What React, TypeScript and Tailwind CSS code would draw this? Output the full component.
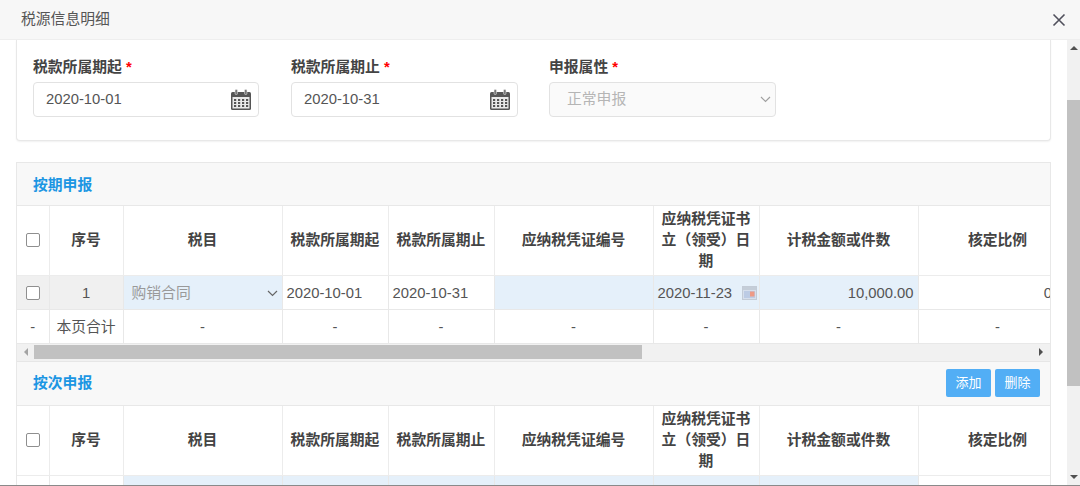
import React from 'react';

const FONT = "font-['Liberation_Sans','Noto_Sans_CJK_SC',sans-serif]";

const columns = [
  { title: '', w: 32 },
  { title: '序号', w: 74 },
  { title: '税目', w: 159 },
  { title: '税款所属期起', w: 106 },
  { title: '税款所属期止', w: 106 },
  { title: '应纳税凭证编号', w: 159 },
  { title: '应纳税凭证书立（领受）日期', w: 106 },
  { title: '计税金额或件数', w: 159 },
  { title: '核定比例', w: 159 },
];

const CalendarIcon = () => (
  <svg width="22" height="22" viewBox="0 0 22 22" className="shrink-0">
    <rect x="1" y="3" width="20" height="18" rx="1.5" fill="#555" />
    <rect x="2.5" y="8" width="17" height="11.5" fill="#e9e9e9" />
    <rect x="5" y="0.5" width="2.5" height="5" rx="1" fill="#777" stroke="#eee" strokeWidth="0.5" />
    <rect x="14.5" y="0.5" width="2.5" height="5" rx="1" fill="#777" stroke="#eee" strokeWidth="0.5" />
    {[4, 8, 12, 16].map((x) =>
      [10, 13, 16].map((y) => <rect key={`${x}-${y}`} x={x} y={y} width="2.2" height="2" fill="#555" />),
    )}
  </svg>
);

const SmallCalendar = () => (
  <svg width="15" height="14" viewBox="0 0 15 14" className="shrink-0">
    <rect x="0.5" y="0.5" width="14" height="13" fill="#d6dfec" stroke="#c3cbd6" />
    <rect x="1" y="1" width="13" height="3" fill="#c4cdd8" />
    <rect x="2" y="5" width="11" height="7" fill="#bccbe4" />
    <rect x="8" y="5.5" width="4.5" height="5" fill="#ee9a86" />
  </svg>
);

const Chevron = ({ color = '#666' }: { color?: string }) => (
  <svg width="11" height="7" viewBox="0 0 11 7" fill="none" className="shrink-0">
    <path d="M1 1l4.5 4.5L10 1" stroke={color} strokeWidth="1.2" />
  </svg>
);

const Checkbox = () => (
  <span className="block w-[14px] h-[14px] mx-auto bg-white border border-[#8f8f8f] rounded-[2px]" />
);

const Label = ({ text }: { text: string }) => (
  <div className="h-[28px] font-bold text-[14.8px] leading-[26px] text-[#444] whitespace-nowrap">
    {text} <span className="text-[#f00]">*</span>
  </div>
);

const DateField = ({ label, value, width }: { label: string; value: string; width: string }) => (
  <div className={width}>
    <Label text={label} />
    <div className="h-[35px] flex items-center justify-between pl-[12px] pr-[6px] border border-[#e2e2e2] rounded-[4px] text-[14.8px] text-[#555]">
      <span>{value}</span>
      <CalendarIcon />
    </div>
  </div>
);

const HeadRow = ({ height }: { height: string }) => (
  <tr className={height}>
    {columns.map((c, i) => (
      <th
        key={i}
        className="px-1 border-r border-b border-[#ececec] text-[14.8px] leading-[21px] font-bold text-[#444] text-center align-middle"
      >
        {i === 0 ? <Checkbox /> : c.title}
      </th>
    ))}
  </tr>
);

const ColGroup = () => (
  <colgroup>
    {columns.map((c, i) => (
      <col key={i} style={{ width: c.w }} />
    ))}
  </colgroup>
);

const cellBase = 'border-r border-b border-[#e8e8e8] text-[14.8px] text-[#555] p-0 pt-[2px] whitespace-nowrap overflow-hidden';
const blue = 'bg-[#e5f0fa]';

const PeriodTable = () => (
  <table className="table-fixed border-collapse w-[1060px]">
    <ColGroup />
    <thead>
      <HeadRow height="h-[69px]" />
    </thead>
    <tbody>
      <tr className="h-[34px]">
        <td className={`${cellBase} bg-[#f0f0f0]`}>
          <Checkbox />
        </td>
        <td className={`${cellBase} bg-[#f0f0f0] text-center`}>1</td>
        <td className={`${cellBase} ${blue}`}>
          <div className="flex items-center justify-between pl-2 pr-[4px] text-[#999]">
            购销合同
            <Chevron />
          </div>
        </td>
        <td className={`${cellBase} pl-[4px]`}>2020-10-01</td>
        <td className={`${cellBase} pl-[4px]`}>2020-10-31</td>
        <td className={`${cellBase} ${blue}`} />
        <td className={`${cellBase} ${blue}`}>
          <div className="flex items-center justify-between pl-[4px] pr-[2px]">
            2020-11-23
            <SmallCalendar />
          </div>
        </td>
        <td className={`${cellBase} ${blue} text-right pr-[4px]`}>10,000.00</td>
        <td className={`${cellBase} text-right pr-[4px]`}>0.00</td>
      </tr>
      <tr className="h-[34px]">
        <td className={`${cellBase} text-center`}>-</td>
        <td className={`${cellBase} text-center`}>本页合计</td>
        {[0, 1, 2, 3, 4, 5, 6].map((i) => (
          <td key={i} className={`${cellBase} text-center`}>
            -
          </td>
        ))}
      </tr>
    </tbody>
  </table>
);

const TimesTable = () => (
  <table className="table-fixed border-collapse w-[1060px]">
    <ColGroup />
    <thead>
      <HeadRow height="h-[70px]" />
    </thead>
    <tbody>
      <tr className="h-[34px]">
        <td className={cellBase}>
          <Checkbox />
        </td>
        <td className={cellBase} />
        {[0, 1, 2, 3, 4, 5].map((i) => (
          <td key={i} className={`${cellBase} ${blue}`} />
        ))}
        <td className={cellBase} />
      </tr>
    </tbody>
  </table>
);

const HScrollbar = () => (
  <div className="h-[18px] shrink-0 flex items-center bg-[#f1f1f1] border-b border-[#e6e6e6]">
    <div className="w-[17px] shrink-0 flex justify-center">
      <span className="w-0 h-0 border-y-[4px] border-y-transparent border-r-[4px] border-r-[#a3a3a3]" />
    </div>
    <div className="w-[608px] h-[14px] bg-[#c1c1c1]" />
    <div className="flex-1" />
    <div className="w-[18px] shrink-0 flex justify-center">
      <span className="w-0 h-0 border-y-[4px] border-y-transparent border-l-[4px] border-l-[#505050]" />
    </div>
  </div>
);

const VScrollbar = () => (
  <div className="w-[13px] shrink-0 flex flex-col bg-[#f1f1f1]">
    <div className="h-[60px] pt-[6px] flex justify-center">
      <span className="w-0 h-0 border-x-[4px] border-x-transparent border-b-[4px] border-b-[#505050]" />
    </div>
    <div className="h-[286px] bg-[#c1c1c1]" />
    <div className="flex-1 flex items-end justify-center pb-[6px]">
      <span className="w-0 h-0 border-x-[4px] border-x-transparent border-t-[4px] border-t-[#505050]" />
    </div>
  </div>
);

const SectionHead = ({
  title,
  size,
  children,
}: {
  title: string;
  size: string;
  children?: React.ReactNode;
}) => (
  <div className={`${size} shrink-0 flex items-center justify-between pl-4 pr-[10px] bg-[#f8f8f8] border-b border-[#e8e8e8]`}>
    <span className="text-[14.8px] font-bold text-[#1c96e3]">{title}</span>
    {children}
  </div>
);

const App: React.FC = () => {
  return (
    <div className={`${FONT} w-[1080px] h-[486px] flex flex-col overflow-hidden bg-white border-b border-[#8a8a8a]`}>
      {/* dialog title */}
      <header className="h-[40px] shrink-0 flex items-center justify-between pl-[21px] pr-[14px] bg-[#f7f7f7] border-b border-[#eeeeee]">
        <span className="text-[14.8px] text-[#555]">税源信息明细</span>
        <svg width="14" height="14" viewBox="0 0 14 14" fill="none">
          <path d="M1.5 1.5l11 11M12.5 1.5l-11 11" stroke="#50505c" strokeWidth="1.6" />
        </svg>
      </header>

      <div className="flex-1 min-h-0 flex">
        <main className="flex-1 min-w-0 pl-4 pr-4 overflow-hidden">
          {/* form card, scrolled so its top edge is hidden */}
          <section className="h-[101px] flex gap-[32px] pl-4 pt-[14px] bg-white border-x border-b border-[#e8e8e8] rounded-b-[4px] shadow-[0_1px_2px_rgba(0,0,0,0.06)]">
            <DateField label="税款所属期起" value="2020-10-01" width="w-[226px]" />
            <DateField label="税款所属期止" value="2020-10-31" width="w-[227px] -mr-px" />
            <div className="w-[227px]">
              <Label text="申报属性" />
              <div className="h-[35px] flex items-center justify-between pl-[17px] pr-[4px] border border-[#e2e2e2] rounded-[4px] bg-[#fafafa] text-[14.8px] text-[#b5b5b5]">
                正常申报
                <Chevron color="#a0a0a0" />
              </div>
            </div>
          </section>

          <section className="mt-[21px] border-x border-t border-[#e8e8e8] overflow-hidden">
            <SectionHead title="按期申报" size="h-[43px] pt-[2px]" />
            <div className="overflow-hidden">
              <PeriodTable />
            </div>
            <HScrollbar />
            <SectionHead title="按次申报" size="h-[44px]">
              <div className="flex gap-[4px]">
                <button className="w-[45px] h-[28px] bg-[#52aef5] rounded-[2px] text-white text-[13px]">添加</button>
                <button className="w-[45px] h-[28px] bg-[#52aef5] rounded-[2px] text-white text-[13px]">删除</button>
              </div>
            </SectionHead>
            <div className="overflow-hidden">
              <TimesTable />
            </div>
          </section>
        </main>
        <VScrollbar />
      </div>
    </div>
  );
};

export default App;
